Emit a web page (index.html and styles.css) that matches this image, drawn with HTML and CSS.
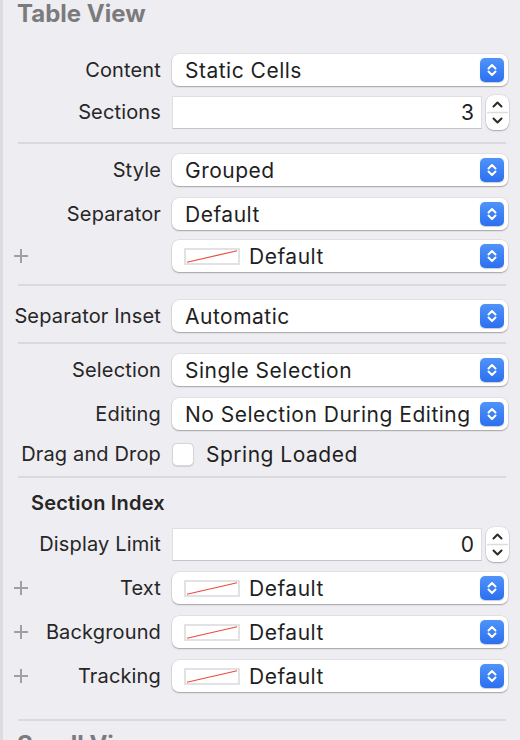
FILE: index.html
```html
<!DOCTYPE html>
<html lang="en">
<head>
<meta charset="utf-8">
<title>Table View Inspector</title>
<link rel="stylesheet" href="styles.css">
</head>
<body>
<div class="inspector">
  <h2 class="group-title">Table View</h2>

  <div class="row first">
    <div class="label">Content</div>
    <div class="control">
      <div class="popup"><span class="value">Static Cells</span><span class="arrows"><svg viewBox="0 0 24 24"><path d="M8.5 10.5 12 7l3.5 3.5M8.5 13.5 12 17l3.5-3.5"/></svg></span></div>
    </div>
  </div>
  <div class="row">
    <div class="label">Sections</div>
    <div class="control">
      <div class="field">3</div>
      <div class="stepper"><svg viewBox="0 0 23 35"><path class="chev" d="M7.5 11.5 11.5 7.5l4 4M7.5 23.5l4 4 4-4"/><path class="divider" d="M1 17.5h21"/></svg></div>
    </div>
  </div>

  <hr class="rule r1">

  <div class="row">
    <div class="label">Style</div>
    <div class="control">
      <div class="popup"><span class="value">Grouped</span><span class="arrows"><svg viewBox="0 0 24 24"><path d="M8.5 10.5 12 7l3.5 3.5M8.5 13.5 12 17l3.5-3.5"/></svg></span></div>
    </div>
  </div>
  <div class="row tight">
    <div class="label">Separator</div>
    <div class="control">
      <div class="popup"><span class="value">Default</span><span class="arrows"><svg viewBox="0 0 24 24"><path d="M8.5 10.5 12 7l3.5 3.5M8.5 13.5 12 17l3.5-3.5"/></svg></span></div>
    </div>
  </div>
  <div class="row">
    <div class="label"><span class="plus"></span></div>
    <div class="control">
      <div class="popup"><span class="swatch"><svg viewBox="0 0 56 17" preserveAspectRatio="none"><path d="M1 16 55 1"/></svg></span><span class="value">Default</span><span class="arrows"><svg viewBox="0 0 24 24"><path d="M8.5 10.5 12 7l3.5 3.5M8.5 13.5 12 17l3.5-3.5"/></svg></span></div>
    </div>
  </div>

  <hr class="rule r2">

  <div class="row">
    <div class="label">Separator Inset</div>
    <div class="control">
      <div class="popup"><span class="value">Automatic</span><span class="arrows"><svg viewBox="0 0 24 24"><path d="M8.5 10.5 12 7l3.5 3.5M8.5 13.5 12 17l3.5-3.5"/></svg></span></div>
    </div>
  </div>

  <hr class="rule r3">

  <div class="row">
    <div class="label">Selection</div>
    <div class="control">
      <div class="popup"><span class="value">Single Selection</span><span class="arrows"><svg viewBox="0 0 24 24"><path d="M8.5 10.5 12 7l3.5 3.5M8.5 13.5 12 17l3.5-3.5"/></svg></span></div>
    </div>
  </div>
  <div class="row tight">
    <div class="label">Editing</div>
    <div class="control">
      <div class="popup"><span class="value">No Selection During Editing</span><span class="arrows"><svg viewBox="0 0 24 24"><path d="M8.5 10.5 12 7l3.5 3.5M8.5 13.5 12 17l3.5-3.5"/></svg></span></div>
    </div>
  </div>
  <div class="row short">
    <div class="label">Drag and Drop</div>
    <div class="control">
      <span class="checkbox"></span><span class="check-label">Spring Loaded</span>
    </div>
  </div>

  <hr class="rule r4">

  <h3 class="sub-title">Section Index</h3>
  <div class="row after-sub">
    <div class="label">Display Limit</div>
    <div class="control">
      <div class="field">0</div>
      <div class="stepper"><svg viewBox="0 0 23 35"><path class="chev" d="M7.5 11.5 11.5 7.5l4 4M7.5 23.5l4 4 4-4"/><path class="divider" d="M1 17.5h21"/></svg></div>
    </div>
  </div>
  <div class="row tight">
    <div class="label"><span class="plus"></span>Text</div>
    <div class="control">
      <div class="popup"><span class="swatch"><svg viewBox="0 0 56 17" preserveAspectRatio="none"><path d="M1 16 55 1"/></svg></span><span class="value">Default</span><span class="arrows"><svg viewBox="0 0 24 24"><path d="M8.5 10.5 12 7l3.5 3.5M8.5 13.5 12 17l3.5-3.5"/></svg></span></div>
    </div>
  </div>
  <div class="row tight">
    <div class="label"><span class="plus"></span>Background</div>
    <div class="control">
      <div class="popup"><span class="swatch"><svg viewBox="0 0 56 17" preserveAspectRatio="none"><path d="M1 16 55 1"/></svg></span><span class="value">Default</span><span class="arrows"><svg viewBox="0 0 24 24"><path d="M8.5 10.5 12 7l3.5 3.5M8.5 13.5 12 17l3.5-3.5"/></svg></span></div>
    </div>
  </div>
  <div class="row tight">
    <div class="label"><span class="plus"></span>Tracking</div>
    <div class="control">
      <div class="popup"><span class="swatch"><svg viewBox="0 0 56 17" preserveAspectRatio="none"><path d="M1 16 55 1"/></svg></span><span class="value">Default</span><span class="arrows"><svg viewBox="0 0 24 24"><path d="M8.5 10.5 12 7l3.5 3.5M8.5 13.5 12 17l3.5-3.5"/></svg></span></div>
    </div>
  </div>

  <hr class="rule r5">

  <h2 class="group-title">Scroll View</h2>
</div>
</body>
</html>
```

FILE: styles.css
```css
html, body {
  margin: 0;
  padding: 0;
  height: 100%;
  overflow: hidden;
  background: #eeedf1;
}

body {
  font-family: Inter, "Noto Sans", "Liberation Sans", sans-serif;
  color: #262626;
}

.inspector {
  min-height: 100%;
  border-left: 3px solid #dcdbdf;
  box-sizing: border-box;
}

.group-title {
  margin: 0;
  padding-left: 14px;
  height: 28px;
  line-height: 28px;
  font-size: 24px;
  font-weight: 700;
  color: #7b7b7d;
}

.sub-title {
  margin: 0;
  padding-left: 28px;
  height: 24px;
  line-height: 24px;
  font-size: 20px;
  font-weight: 600;
  letter-spacing: 0.2px;
  color: #262626;
}

/* one label + control line */
.row {
  display: grid;
  grid-template-columns: 169px 337px;
  align-items: center;
  height: 42px;
}
.row.first { margin-top: 21px; }
.row.tight { margin-top: 2px; }
.row.short { height: 38px; }
.row.after-sub { margin-top: 8px; }

.label {
  display: flex;
  align-items: center;
  justify-content: flex-end;
  padding-right: 11px;
  font-size: 20px;
  letter-spacing: 0.15px;
  white-space: nowrap;
  color: #262626;
}

.plus {
  position: relative;
  width: 14px;
  height: 14px;
  margin-left: 11px;
  margin-right: auto;
}
.plus::before,
.plus::after {
  content: "";
  position: absolute;
  background: #a0a0a2;
}
.plus::before { left: 0; right: 0; top: 6px; height: 1.6px; }
.plus::after { top: 0; bottom: 0; left: 6px; width: 1.6px; }

.control {
  display: flex;
  align-items: center;
  gap: 4px;
}

/* pop-up button */
.popup {
  flex: 1;
  height: 32px;
  margin-right: 1px;
  display: flex;
  align-items: center;
  padding: 0 4px 0 13px;
  background: #fff;
  border-radius: 7px;
  box-shadow: 0 0 0 0.5px rgba(0, 0, 0, 0.1), 0 1px 1.5px rgba(0, 0, 0, 0.28);
  font-size: 21px;
  letter-spacing: 0.5px;
  color: #1f1f1f;
  white-space: nowrap;
}
.popup .value { flex: 1; overflow: hidden; }

.arrows {
  width: 24px;
  height: 24px;
  border-radius: 5px;
  background: linear-gradient(#4f93f9, #2c6ff0);
  box-shadow: 0 0.5px 1px rgba(0, 0, 0, 0.2);
  flex: none;
}
.arrows svg { display: block; width: 24px; height: 24px; }
.arrows path {
  fill: none;
  stroke: #fff;
  stroke-width: 2;
  stroke-linecap: round;
  stroke-linejoin: round;
}

.swatch {
  width: 56px;
  height: 17px;
  margin-left: -1px;
  margin-right: 9px;
  box-sizing: border-box;
  border: 2px solid #e2e2e4;
  background: #fff;
  flex: none;
}
.swatch svg { display: block; width: 100%; height: 100%; }
.swatch path { stroke: #ef4a3c; stroke-width: 1.2; fill: none; vector-effect: non-scaling-stroke; }

/* numeric text field with stepper */
.field {
  flex: 1;
  height: 33px;
  box-sizing: border-box;
  background: #fff;
  border: 1px solid #dedede;
  border-bottom-color: #c4c4c4;
  text-align: right;
  padding-right: 7px;
  font-size: 21px;
  line-height: 31px;
  color: #1f1f1f;
}

.stepper {
  width: 23px;
  height: 35px;
  border-radius: 8px;
  background: #fff;
  box-shadow: 0 0 0 0.5px rgba(0, 0, 0, 0.1), 0 1px 1.5px rgba(0, 0, 0, 0.25);
  flex: none;
}
.stepper svg { display: block; width: 23px; height: 35px; }
.stepper .chev {
  fill: none;
  stroke: #2a2a2a;
  stroke-width: 2;
  stroke-linecap: round;
  stroke-linejoin: round;
}
.stepper .divider { stroke: #dcdcdc; stroke-width: 1.5; }

.checkbox {
  width: 22px;
  height: 23px;
  box-sizing: border-box;
  background: #fff;
  border-radius: 5px;
  border: 1px solid #d6d6d8;
  box-shadow: 0 0.5px 1px rgba(0, 0, 0, 0.12);
  flex: none;
}
.check-label {
  margin-left: 8px;
  font-size: 21px;
  letter-spacing: 0.5px;
  color: #1f1f1f;
}

/* section separators */
.rule {
  margin: 0 0 0 15px;
  width: 488px;
  height: 2px;
  border: 0;
  background: #dadade;
}
.rule.r1 { margin-top: 9px; margin-bottom: 5px; }
.rule.r2 { margin-top: 7px; margin-bottom: 9px; }
.rule.r3 { margin-top: 5px; margin-bottom: 5px; }
.rule.r4 { margin-top: 3px; margin-bottom: 13px; }
.rule.r5 { margin-top: 22px; margin-bottom: 10px; }
```
